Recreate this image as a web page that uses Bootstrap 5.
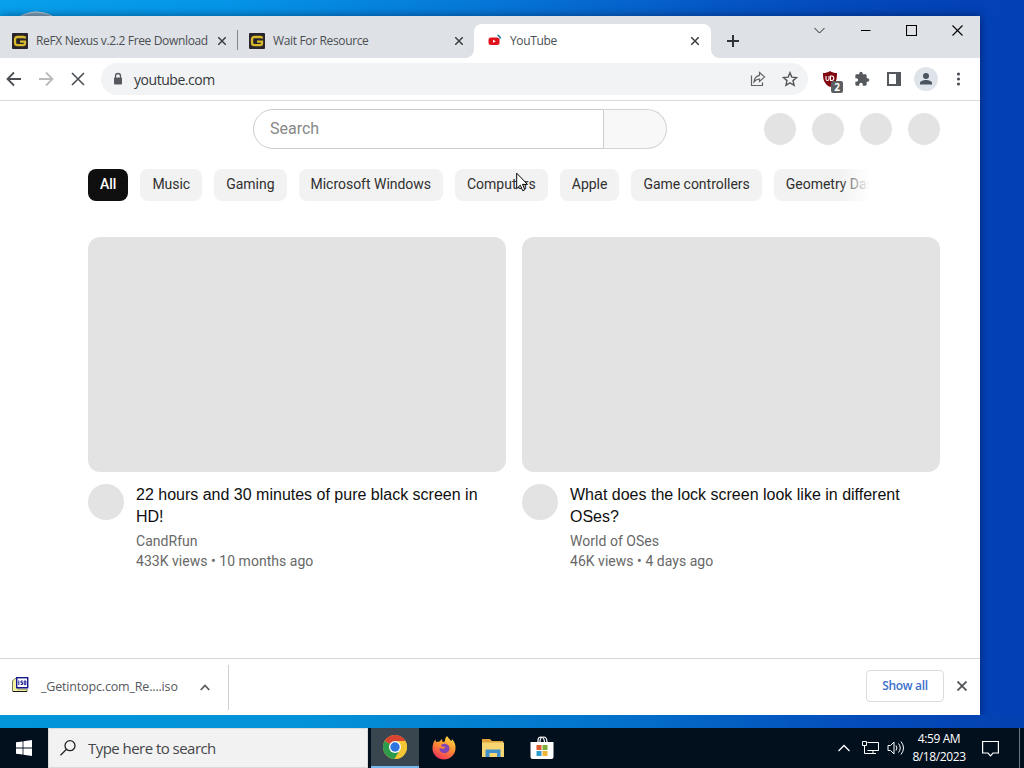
<!DOCTYPE html>
<html lang="en">

<head>
    <meta charset="UTF-8">
    <meta name="viewport" content="width=device-width, initial-scale=1.0">
    <title>YouTube</title>
    <!-- Bootstrap CSS -->
    <link href="https://cdn.jsdelivr.net/npm/bootstrap@5.3.0/dist/css/bootstrap.min.css" rel="stylesheet">
    <style>
        body {
            height: 768px;
            font-family: "Open Sans", "Noto Sans", sans-serif;
            background: linear-gradient(90deg, #08a0ec 0, #0595e8 220px, #0678d8 480px, #0554c4 740px, #0345b8 900px, #0340b5 1024px);
        }

        svg {
            display: block;
            flex-shrink: 0;
        }

        .desktop-top {
            height: 16px;
            padding-left: 20px;
        }

        .desktop-bottom {
            height: 13px;
            background: linear-gradient(90deg, #0295d8 0, #0393d8 300px, #0373cc 600px, #044cba 860px, #0340b0 1024px);
        }

        .browser {
            width: 980px;
            height: 699px;
            box-shadow: 0 0 9px rgba(0, 0, 30, .5);
        }

        /* Tab strip */
        .tabstrip {
            height: 42px;
            background: #dee1e6;
            font-size: 12px;
            color: #4b4f53;
        }

        .tab-item {
            width: 237px;
            height: 34px;
            padding: 0 11px 0 12px;
            gap: 8px;
        }

        .tab-item.middle {
            width: 236px;
            padding-left: 11px;
        }

        .tab-item.active {
            position: relative;
            background: #fff;
            border-radius: 8px 8px 0 0;
            padding: 0 12px;
        }

        .tab-item.active::before,
        .tab-item.active::after {
            content: "";
            position: absolute;
            bottom: 0;
            width: 8px;
            height: 8px;
        }

        .tab-item.active::before {
            left: -8px;
            background: radial-gradient(circle at 0 0, transparent 7.5px, #fff 8px);
        }

        .tab-item.active::after {
            right: -8px;
            background: radial-gradient(circle at 100% 0, transparent 7.5px, #fff 8px);
        }

        .tab-title {
            letter-spacing: -.35px;
        }

        .tab-sep {
            width: 1px;
            height: 20px;
            background: #84878b;
        }

        .window-buttons {
            height: 28px;
            gap: 35px;
            padding-right: 17px;
        }

        /* Toolbar */
        .toolbar {
            height: 43px;
            border-bottom: 1px solid #d9dadc;
            padding: 0 6px;
        }

        .omnibox {
            width: 707px;
            height: 32px;
            margin-left: 15px;
            padding: 0 10px;
            border-radius: 16px;
            background: #f1f3f4;
            font-size: 14px;
            color: #36393d;
        }

        .url {
            margin-left: 9px;
            letter-spacing: -.45px;
        }

        .tool-cell {
            width: 32px;
            height: 32px;
        }

        .avatar-btn {
            width: 24px;
            height: 24px;
            background: #dfe3ea;
        }

        .ext-count {
            position: absolute;
            left: 17px;
            top: 18px;
            width: 12px;
            height: 12px;
            border-radius: 2px;
            background: #5c5f61;
            color: #fff;
            font: bold 10px/12px "Open Sans", sans-serif;
            text-align: center;
        }

        /* Page */
        .site {
            height: 557px;
            padding: 8px 40px 0 88px;
            font-family: Roboto, sans-serif;
        }

        .search-row {
            height: 40px;
            padding-left: 165px;
        }

        .search-input {
            width: 351px;
            height: 40px;
            padding: 0 16px;
            border: 1px solid #ccc;
            border-radius: 20px 0 0 20px;
            font-size: 16px;
            line-height: 37px;
            color: #888;
        }

        .search-btn {
            width: 63px;
            height: 40px;
            border: 1px solid #d3d3d3;
            border-left: 0;
            border-radius: 0 20px 20px 0;
            background: #f8f8f8;
        }

        .ghost {
            background: #e3e3e3;
        }

        .ghost-sm {
            width: 32px;
            height: 32px;
        }

        .ghost-md {
            width: 36px;
            height: 36px;
            margin-top: 12px;
        }

        .chips {
            position: relative;
            width: 787px;
            height: 32px;
            margin-top: 20px;
            gap: 12px;
        }

        .chips::after {
            content: "";
            position: absolute;
            right: 0;
            top: 0;
            width: 36px;
            height: 32px;
            background: linear-gradient(90deg, rgba(255, 255, 255, 0), #fff 85%);
        }

        .chip {
            flex-shrink: 0;
            height: 32px;
            padding: 0 12px;
            border-radius: 8px;
            background: #f2f2f2;
            color: #303030;
            font-size: 14px;
            line-height: 31px;
            letter-spacing: -.02px;
            white-space: nowrap;
        }

        .chip.active {
            background: #0f0f0f;
            color: #fff;
            font-weight: 500;
        }

        .videos {
            margin-top: 36px;
            gap: 16px;
        }

        .video {
            width: 418px;
        }

        .thumb {
            height: 235px;
            border-radius: 12px;
        }

        .video-title {
            margin: 12px 0 3px;
            font: 400 16px/22px "Liberation Sans", sans-serif;
            color: #0f0f0f;
        }

        .video-info {
            font-size: 14px;
            line-height: 20px;
            letter-spacing: .03px;
            color: #686868;
        }

        /* Download shelf */
        .shelf {
            height: 57px;
            border-top: 1px solid #d5d7da;
            font-size: 12.5px;
            color: #55585c;
        }

        .shelf-item {
            width: 229px;
            height: 45px;
            padding: 0 18px 0 12px;
            border-right: 1px solid #ced0d3;
        }

        .file-name {
            margin-left: 12px;
            padding-top: 1px;
            letter-spacing: -.17px;
        }

        .show-all {
            width: 78px;
            height: 32px;
            margin-bottom: 2px;
            padding: 0;
            border: 1px solid #dadce0;
            border-radius: 4px;
            font: 600 12px/28px "Open Sans", sans-serif;
            letter-spacing: -.3px;
            color: #3c70cc;
        }

        .shelf-close {
            margin: 0 13px 2px;
        }

        /* Taskbar */
        .taskbar {
            height: 40px;
            background: #020f1d;
            color: #fff;
        }

        .start {
            width: 48px;
        }

        .task-search {
            width: 320px;
            padding-left: 11px;
            background: #f2f2f2;
            border: 1px solid #d8dadc;
            font-size: 15px;
            letter-spacing: -.54px;
            color: #44474a;
        }

        .task-app {
            width: 49px;
            height: 40px;
        }

        .task-app.active {
            width: 48px;
            margin-left: 3px;
            background: #394650;
            border-bottom: 2px solid #76b9ed;
        }

        .tray {
            gap: 8px;
        }

        .clock {
            width: 62px;
            margin-left: -5px;
            font-size: 12px;
            line-height: 18px;
            letter-spacing: -.4px;
        }

        .notify {
            margin: 0 12px 0 4px;
        }

        .show-desktop {
            width: 5px;
        }

        .cursor {
            position: absolute;
            left: 516px;
            top: 172px;
        }
    </style>
</head>

<body class="overflow-hidden d-flex flex-column">
    <div class="desktop-top d-flex align-items-end">
        <svg width="33" height="6" viewBox="0 0 33 6">
            <path d="M0 6Q16-3 33 6z" fill="#81a5bd" />
            <path d="M1 6Q16-2 32 6" fill="none" stroke="#b8c8d2" />
        </svg>
    </div>

    <main class="browser bg-white">
        <!-- Tabs -->
        <div class="tabstrip d-flex align-items-end">
            <div class="tab-item d-flex align-items-center">
                <svg width="16" height="16" viewBox="0 0 16 16">
                    <rect width="16" height="16" rx="1" fill="#29242b" />
                    <path d="M13 5.500V5q0-1-1.500-1h-6Q3 4 3 6.500v3Q3 12.200 5.500 12.200h5q2.500 0 2.500-2V8.700H8" fill="none" stroke="#d8b92c" stroke-width="2.300" />
                </svg>
                <span class="tab-title flex-grow-1 text-nowrap">ReFX Nexus v.2.2 Free Download</span>
                <svg width="8" height="8" viewBox="0 0 8 8" stroke="#3c4043" stroke-width="1.500">
                    <path d="M0 0l8 8M8 0L0 8" />
                </svg>
            </div>
            <div class="tab-sep mb-2"></div>
            <div class="tab-item middle d-flex align-items-center">
                <svg width="16" height="16" viewBox="0 0 16 16">
                    <rect width="16" height="16" rx="1" fill="#29242b" />
                    <path d="M13 5.500V5q0-1-1.500-1h-6Q3 4 3 6.500v3Q3 12.200 5.500 12.200h5q2.500 0 2.500-2V8.700H8" fill="none" stroke="#d8b92c" stroke-width="2.300" />
                </svg>
                <span class="tab-title flex-grow-1 text-nowrap">Wait For Resource</span>
                <svg width="8" height="8" viewBox="0 0 8 8" stroke="#3c4043" stroke-width="1.500">
                    <path d="M0 0l8 8M8 0L0 8" />
                </svg>
            </div>
            <div class="tab-item active d-flex align-items-center">
                <svg width="16" height="16" viewBox="0 0 16 16">
                    <rect x="2.500" y="4.500" width="11" height="7.500" rx="2.500" fill="#e0121c" />
                    <path d="M7 6.700l2.800 1.500L7 9.800z" fill="#fff" />
                    <path d="M11.500 2c1.800.7 2.700 2 3 3.700" fill="none" stroke="#2f7fa3" stroke-width="1.800" />
                </svg>
                <span class="tab-title flex-grow-1 text-nowrap">YouTube</span>
                <svg width="8" height="8" viewBox="0 0 8 8" stroke="#3c4043" stroke-width="1.500">
                    <path d="M0 0l8 8M8 0L0 8" />
                </svg>
            </div>
            <svg class="ms-3" width="12" height="34" viewBox="0 0 12 34" stroke="#303438" stroke-width="2">
                <path d="M0 17h12M6 11v12" />
            </svg>
            <div class="window-buttons d-flex align-items-center ms-auto align-self-start">
                <svg width="12" height="12" viewBox="0 0 12 12" fill="none" stroke="#222">
                    <path d="M.5 4l5 5 5-5" />
                </svg>
                <svg width="10" height="10" viewBox="0 0 10 10" stroke="#000">
                    <path d="M-.5 5.500h10" />
                </svg>
                <svg width="11" height="11" viewBox="0 0 11 11" fill="none" stroke="#000" stroke-width="1.100">
                    <path d="M.5.500h10v10H.5z" />
                </svg>
                <svg width="11" height="11" viewBox="0 0 11 11" stroke="#000" stroke-width="1.100">
                    <path d="M.5.5l10 10M10.500.5l-10 10" />
                </svg>
            </div>
        </div>

        <!-- Toolbar -->
        <div class="toolbar d-flex align-items-center">
            <svg width="16" height="16" viewBox="0 0 16 16" fill="none" stroke="#4b4f53" stroke-width="1.800">
                <path d="M15 8H2M8 1.500L1.500 8 8 14.500" />
            </svg>
            <svg class="ms-3" width="16" height="16" viewBox="0 0 16 16" fill="none" stroke="#b9bbbd" stroke-width="1.800">
                <path d="M1 8h13M8 1.500L14.500 8 8 14.500" />
            </svg>
            <svg class="ms-3" width="16" height="16" viewBox="0 0 16 16" stroke="#4b4f53" stroke-width="1.600">
                <path d="M2 2l12 12M14 2L2 14" />
            </svg>
            <div class="omnibox d-flex align-items-center">
                <svg width="14" height="14" viewBox="0 0 14 14">
                    <path d="M4.500 6V4a2.500 2.500 0 0 1 5 0v2" fill="none" stroke="#55595d" stroke-width="1.300" />
                    <rect x="3" y="5.500" width="8" height="7" rx="1" fill="#55595d" />
                </svg>
                <span class="url">youtube.com</span>
                <svg class="ms-auto" width="16" height="16" viewBox="0 0 16 16" fill="none" stroke="#5f6368" stroke-width="1.200">
                    <path d="M1.500 4.500v10h11v-3M9.500 1.500l5 4.500-5 4.500V8C7 8 5.500 9 4 11c.3-3.500 2-6.200 5.500-6.700z" />
                </svg>
                <svg class="ms-3" width="16" height="16" viewBox="0 0 16 16" fill="none" stroke="#55595d" stroke-width="1.400">
                    <path d="M8 1.700l1.800 4.400 4.800.4-3.600 3.100 1.100 4.700L8 11.800l-4.100 2.500L5 9.600 1.400 6.500l4.800-.4z" />
                </svg>
            </div>
            <div class="d-flex align-items-center ms-auto">
                <div class="tool-cell position-relative d-flex align-items-center justify-content-center">
                    <svg width="16" height="16" viewBox="0 0 16 16">
                        <path d="M8 0c2 1.500 4.500 2 7 2 0 6-.5 10.500-7 14C1.500 12.500 1 8 1 2c2.500 0 5-.5 7-2z" fill="#800610" />
                        <path d="M4 5v3q0 1.500 1.500 1.500T7 8V5M8.500 5v4.500h1.300q2 0 2-2.200T9.800 5z" fill="none" stroke="#fff" stroke-width="1.100" />
                    </svg>
                    <span class="ext-count">2</span>
                </div>
                <div class="tool-cell d-flex align-items-center justify-content-center">
                    <svg width="16" height="16" viewBox="0 0 24 24" fill="#55595d">
                        <path d="M20.500 11H19V7c0-1.100-.9-2-2-2h-4V3.500a2.500 2.500 0 0 0-5 0V5H4a2 2 0 0 0-2 2v3.800h1.500a2.700 2.700 0 0 1 0 5.400H2V20c0 1.100.9 2 2 2h3.800v-1.500a2.700 2.700 0 0 1 5.400 0V22H17c1.100 0 2-.9 2-2v-4h1.500a2.500 2.500 0 0 0 0-5z" />
                    </svg>
                </div>
                <div class="tool-cell d-flex align-items-center justify-content-center">
                    <svg width="16" height="16" viewBox="0 0 16 16">
                        <path d="M1 1h14v14H1z" fill="#55595d" />
                        <path d="M3 3h7v10H3z" fill="#fff" />
                    </svg>
                </div>
                <div class="tool-cell d-flex align-items-center justify-content-center">
                    <div class="avatar-btn rounded-circle d-flex align-items-center justify-content-center">
                        <svg width="14" height="14" viewBox="0 0 14 14" fill="#4a5560">
                            <circle cx="7" cy="4" r="3" />
                            <path d="M1 12.500V11c0-2 3.500-3 6-3s6 1 6 3v1.500z" />
                        </svg>
                    </div>
                </div>
                <div class="tool-cell d-flex align-items-center justify-content-center">
                    <svg width="16" height="16" viewBox="0 0 16 16" fill="#4d5155">
                        <circle cx="8.500" cy="3" r="1.600" />
                        <circle cx="8.500" cy="8" r="1.600" />
                        <circle cx="8.500" cy="13" r="1.600" />
                    </svg>
                </div>
            </div>
        </div>

        <!-- Page content -->
        <div class="site">
            <div class="search-row d-flex align-items-center">
                <div class="search-input">Search</div>
                <div class="search-btn"></div>
                <div class="d-flex gap-3 ms-auto">
                    <div class="ghost ghost-sm rounded-circle"></div>
                    <div class="ghost ghost-sm rounded-circle"></div>
                    <div class="ghost ghost-sm rounded-circle"></div>
                    <div class="ghost ghost-sm rounded-circle"></div>
                </div>
            </div>

            <div class="chips d-flex overflow-hidden">
                <div class="chip active">All</div>
                <div class="chip">Music</div>
                <div class="chip">Gaming</div>
                <div class="chip">Microsoft Windows</div>
                <div class="chip">Computers</div>
                <div class="chip">Apple</div>
                <div class="chip">Game controllers</div>
                <div class="chip">Geometry Dash</div>
            </div>

            <div class="videos d-flex">
                <div class="video">
                    <div class="thumb ghost"></div>
                    <div class="d-flex">
                        <div class="ghost ghost-md rounded-circle flex-shrink-0 me-2"></div>
                        <div class="ms-1">
                            <h3 class="video-title">22 hours and 30 minutes of pure black screen in HD!</h3>
                            <div class="video-info">CandRfun</div>
                            <div class="video-info">433K views • 10 months ago</div>
                        </div>
                    </div>
                </div>
                <div class="video">
                    <div class="thumb ghost"></div>
                    <div class="d-flex">
                        <div class="ghost ghost-md rounded-circle flex-shrink-0 me-2"></div>
                        <div class="ms-1 pe-4">
                            <h3 class="video-title">What does the lock screen look like in different OSes?</h3>
                            <div class="video-info">World of OSes</div>
                            <div class="video-info">46K views • 4 days ago</div>
                        </div>
                    </div>
                </div>
            </div>
        </div>

        <!-- Downloads -->
        <div class="shelf d-flex align-items-center">
            <div class="shelf-item d-flex align-items-center">
                <svg class="mb-1" width="17" height="16" viewBox="0 0 17 16">
                    <path d="M.5 4L3 1.500h3V12h9v2.500H.5z" fill="#f3ef9c" stroke="#77775e" />
                    <path d="M1 14.500h14" stroke="#161616" />
                    <rect x="4.700" y=".7" width="11" height="10" fill="#fff" stroke="#16168f" stroke-width="1.400" />
                    <path d="M6.800 3.500v4.500M10.700 4H9v1.700h1.500v1.800H8.600M12.200 4h1.600v3.500h-1.600z" fill="none" stroke="#16168f" />
                </svg>
                <span class="file-name">_Getintopc.com_Re....iso</span>
                <svg class="ms-auto" width="10" height="7" viewBox="0 0 10 7" fill="none" stroke="#55585c" stroke-width="1.700">
                    <path d="M.7 6L5 1.500 9.300 6" />
                </svg>
            </div>
            <button type="button" class="btn show-all ms-auto">Show all</button>
            <svg class="shelf-close" width="10" height="10" viewBox="0 0 10 10" stroke="#505357" stroke-width="1.800">
                <path d="M.5.5l9 9M9.500.5l-9 9" />
            </svg>
        </div>
    </main>

    <div class="desktop-bottom"></div>

    <!-- Taskbar -->
    <footer class="taskbar d-flex">
        <div class="start d-flex align-items-center justify-content-center">
            <svg width="16" height="16" viewBox="0 0 16 16" fill="#fff">
                <path d="M0 2.300L6.600 1.400v6.200H0zM7.400 1.300L16 0v7.600H7.400zM0 8.400h6.600v6.200L0 13.700zM7.400 8.400H16V16l-8.600-1.300z" />
            </svg>
        </div>
        <div class="task-search d-flex align-items-center">
            <svg width="16" height="16" viewBox="0 0 16 16" fill="none" stroke="#222" stroke-width="1.300">
                <circle cx="10" cy="5.700" r="5" />
                <path d="M6.500 9.300L.5 15.300" />
            </svg>
            <span class="ms-2 ps-1">Type here to search</span>
        </div>
        <div class="task-app active d-flex align-items-center justify-content-center">
            <svg width="24" height="24" viewBox="0 0 24 24">
                <circle cx="12" cy="12" r="12" fill="#e7bd30" />
                <path d="M12 12L1.600 6A12 12 0 0 1 22.400 6z" fill="#d94332" />
                <path d="M1.600 6A12 12 0 0 0 11.500 24L17 15l-5-3z" fill="#2d9a4c" />
                <path d="M12 6h10.400A12 12 0 0 1 11.500 24L17 15z" fill="#f4c534" />
                <circle cx="12" cy="12" r="6" fill="#fff" />
                <circle cx="12" cy="12" r="4.700" fill="#2f75df" />
            </svg>
        </div>
        <div class="task-app d-flex align-items-center justify-content-center">
            <svg width="24" height="24" viewBox="0 0 24 24">
                <defs>
                    <linearGradient id="fox" x1=".8" y1="0" x2=".3" y2="1">
                        <stop offset="0" stop-color="#ffe04a" />
                        <stop offset=".45" stop-color="#ff9430" />
                        <stop offset="1" stop-color="#f0305c" />
                    </linearGradient>
                </defs>
                <path d="M15 0c1 2 3 3 4 5 1-.3.900-1 .9-2C22.500 5.500 24 9 23.500 13c-.7 6-5.500 10.500-11.500 10.500S.7 18.800.5 13C.4 9 1.500 5.500 3.500 3.500L4 6l3.500-.4L10 3l.5 3 2.500-.5C12.700 3.500 13.500 1.500 15 0z" fill="url(#fox)" />
                <path d="M9 9c4-3 9 0 8.500 4-.4 3.500-4 5-7 3.800C8 16 7 14 7.500 12l4 1 2-2-3.500-.5z" fill="#8146b4" />
            </svg>
        </div>
        <div class="task-app d-flex align-items-center justify-content-center">
            <svg width="22" height="20" viewBox="0 0 22 20">
                <path d="M0 1h8l2 2h11v5H0z" fill="#e0a43a" />
                <path d="M0 4.500h22V19H0z" fill="#f8d573" />
                <path d="M3.500 19v-7.500h15V19H15v-4H7.500v4z" fill="#3f8fcb" />
            </svg>
        </div>
        <div class="task-app d-flex align-items-center justify-content-center">
            <svg width="24" height="24" viewBox="0 0 24 24">
                <path d="M8 6V4.500Q8 1 11 1t3.500 5M10 6q0-5 3.500-5T17 6" fill="none" stroke="#fff" stroke-width="1.200" />
                <path d="M.5 6h23v15q0 2-2 2h-19q-2 0-2-2z" fill="#fff" />
                <path d="M6.500 9h5v5h-5z" fill="#dc5c32" />
                <path d="M12.500 9h5v5h-5z" fill="#7cad37" />
                <path d="M6.500 15h5v5h-5z" fill="#2d9ad0" />
                <path d="M12.500 15h5v5h-5z" fill="#efb534" />
            </svg>
        </div>

        <div class="tray d-flex align-items-center ms-auto">
            <svg width="12" height="8" viewBox="0 0 12 8" fill="none" stroke="#fff" stroke-width="1.300">
                <path d="M.5 7L6 1.500 11.500 7" />
            </svg>
            <svg class="ms-1" width="17" height="16" viewBox="0 0 17 16" fill="none" stroke="#fff">
                <path d="M5.500 2.500h11v8h-11M.5 1.500h4v4h-4zM2.500 5.500v8h4M11 10.500v3M6 13.500h8" />
            </svg>
            <svg width="18" height="16" viewBox="0 0 18 16" fill="none" stroke="#fff">
                <path d="M1 5.500h2.500L7 2v12l-3.500-3.500H1zM9 5.500q1.800 2.500 0 5M11.500 3.500q3.500 4.500 0 9M14 1.500q5 6.500 0 13" />
            </svg>
            <div class="clock text-center">
                <div>4:59 AM</div>
                <div>8/18/2023</div>
            </div>
            <svg class="notify" width="17" height="17" viewBox="0 0 17 17" fill="none" stroke="#fff" stroke-width="1.200">
                <path d="M.6 1.500h15.800v11.500H11L8.500 15.800 6 13H.6z" />
            </svg>
            <div class="show-desktop border-start border-secondary align-self-stretch"></div>
        </div>
    </footer>

    <svg class="cursor" width="13" height="20" viewBox="0 0 13 20" fill="#fff" stroke="#000">
        <path d="M.7 1.200v15.500l3.600-3.500 2.400 5.500 2.200-1-2.400-5.300h5z" />
    </svg>

    <!-- Bootstrap JS -->
    <script src="https://cdn.jsdelivr.net/npm/bootstrap@5.3.0/dist/js/bootstrap.bundle.min.js"></script>
</body>

</html>
